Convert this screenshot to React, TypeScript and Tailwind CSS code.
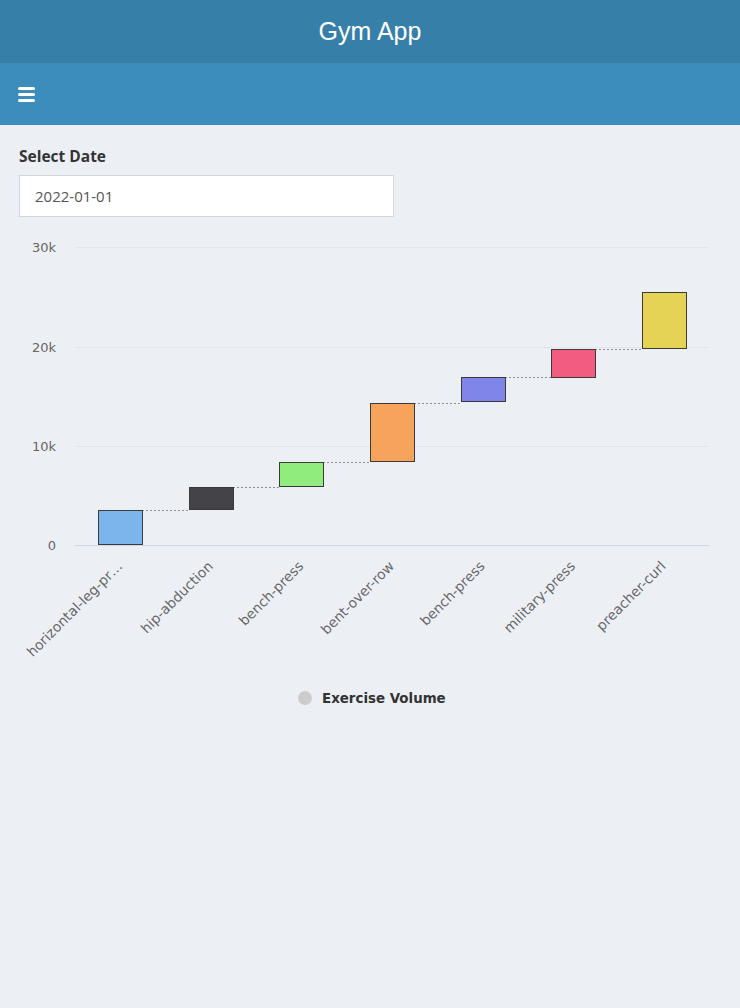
import React from "react";

const cats = [
  { name: "horizontal-leg-pr…", top: 510, bottom: 545, color: "#7cb5ec" },
  { name: "hip-abduction", top: 487, bottom: 510, color: "#434348" },
  { name: "bench-press", top: 462, bottom: 487, color: "#90ed7d" },
  { name: "bent-over-row", top: 403, bottom: 462, color: "#f7a35c" },
  { name: "bench-press", top: 377, bottom: 402, color: "#8085e9" },
  { name: "military-press", top: 349, bottom: 378, color: "#f15c80" },
  { name: "preacher-curl", top: 292, bottom: 349, color: "#e4d354" },
];

// chart svg starts at page y=225
const OY = 225;
const left = 75;
const right = 709;
const step = (right - left) / cats.length;
const chartFont = '"DejaVu Sans", Verdana, sans-serif';

const Chart = () => {
  const ticks = [
    { label: "30k", y: 247 },
    { label: "20k", y: 347 },
    { label: "10k", y: 446 },
    { label: "0", y: 545 },
  ];
  return (
    <svg width={740} height={500} className="block" style={{ fontFamily: chartFont }}>
      {ticks.map((t) => (
        <g key={t.label}>
          <line
            x1={left}
            x2={right}
            y1={t.y - OY + 0.5}
            y2={t.y - OY + 0.5}
            stroke={t.label === "0" ? "#ccd6eb" : "#e2e5ea"}
          />
          <text x={56} y={t.y - OY + 5} textAnchor="end" fontSize={13} fill="#666">
            {t.label}
          </text>
        </g>
      ))}
      {cats.map((c, i) => {
        const cx = left + step * i + step / 2;
        const x = Math.round(cx - 22) + 0.5;
        const next = cats[i + 1];
        return (
          <g key={i}>
            {next && (
              <line
                x1={x + 44}
                x2={Math.round(cx + step - 22)}
                y1={c.top - OY + 0.5}
                y2={c.top - OY + 0.5}
                stroke="#333"
                strokeDasharray="1 3"
              />
            )}
            <rect
              x={x}
              y={c.top - OY + 0.5}
              width={44}
              height={c.bottom - c.top - 1}
              fill={c.color}
              stroke="#3a3a3a"
            />
            <text
              x={cx + 3}
              y={567 - OY}
              textAnchor="end"
              fontSize={13.8}
              fill="#666"
              transform={`rotate(-45 ${cx + 3} ${567 - OY})`}
            >
              {c.name}
            </text>
          </g>
        );
      })}
      <circle cx={305} cy={698 - OY} r={7} fill="#cccccc" />
      <text x={322} y={703 - OY} fontSize={13.4} fontWeight="bold" fill="#333">
        Exercise Volume
      </text>
    </svg>
  );
};

export default function App() {
  return (
    <div className="min-h-[1008px] bg-[#ecf0f5]" style={{ fontFamily: '"Open Sans", "Noto Sans", sans-serif' }}>
      <header className="flex h-[63px] items-center justify-center bg-[#367fa9]">
        <span className="text-[25px] text-white" style={{ fontFamily: '"Liberation Sans", Arial, sans-serif' }}>
          Gym App
        </span>
      </header>
      <nav className="flex h-[62px] items-center bg-[#3c8dbc] px-[18px]">
        <div className="flex w-[17px] flex-col gap-[3px]">
          <span className="h-[3px] rounded-sm bg-white" />
          <span className="h-[3px] rounded-sm bg-white" />
          <span className="h-[3px] rounded-sm bg-white" />
        </div>
      </nav>
      <main className="px-[19px] pt-[20px]">
        <label className="block text-[15.5px] font-bold text-[#333]">Select Date</label>
        <input
          readOnly
          value="2022-01-01"
          className="mt-[7px] h-[42px] w-[375px] border border-[#d2d6de] bg-white px-[15px] text-[15px] text-[#555] outline-none"
        />
      </main>
      <div className="mt-[8px]">
        <Chart />
      </div>
    </div>
  );
}
